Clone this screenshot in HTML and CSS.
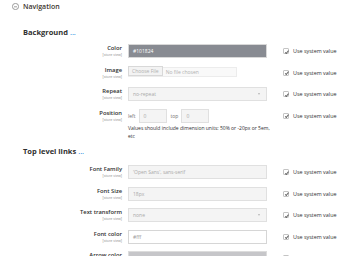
FILE: index.html
```html
<!DOCTYPE html>
<html lang="en">
<head>
    <meta charset="UTF-8">
    <meta name="viewport" content="width=device-width, initial-scale=1.0">
    <title>Navigation</title>
    <link rel="stylesheet" href="styles.css">
</head>
<body>
    <div class="section">
        <div class="section_head">
            <svg class="toggle" width="7" height="7" viewBox="0 0 14 14">
                <circle cx="7" cy="7" r="6.2" fill="none" stroke="#6b6b6b" stroke-width="1.3"/>
                <path d="M4 7.6h6" stroke="#6b6b6b" stroke-width="1.3"/>
            </svg>
            <span>Navigation</span>
        </div>

        <h3 class="group_title">Background <span class="dots">...</span></h3>

        <div class="field">
            <div class="label"><span class="name">Color</span><span class="scope">[store view]</span></div>
            <div class="value"><div class="input color_input">#101824</div></div>
            <div class="use_default"><span class="check"></span>Use system value</div>
        </div>

        <div class="field">
            <div class="label"><span class="name">Image</span><span class="scope">[store view]</span></div>
            <div class="value">
                <div class="file_input"><span class="file_btn">Choose File</span>No file chosen</div>
            </div>
            <div class="use_default"><span class="check"></span>Use system value</div>
        </div>

        <div class="field">
            <div class="label"><span class="name">Repeat</span><span class="scope">[store view]</span></div>
            <div class="value"><div class="input select">no-repeat<span class="arrow"></span></div></div>
            <div class="use_default"><span class="check"></span>Use system value</div>
        </div>

        <div class="field">
            <div class="label"><span class="name">Position</span><span class="scope">[store view]</span></div>
            <div class="value">
                <div class="position">
                    <span class="pos_label">left</span><div class="input small">0</div>
                    <span class="pos_label">top</span><div class="input small">0</div>
                </div>
                <p class="note">Values should include dimension units: 50% or -20px or 5em,<br>etc</p>
            </div>
            <div class="use_default"><span class="check"></span>Use system value</div>
        </div>

        <h3 class="group_title second">Top level links <span class="dots">...</span></h3>

        <div class="field">
            <div class="label"><span class="name">Font Family</span><span class="scope">[store view]</span></div>
            <div class="value"><div class="input">'Open Sans', sans-serif</div></div>
            <div class="use_default"><span class="check"></span>Use system value</div>
        </div>

        <div class="field">
            <div class="label"><span class="name">Font Size</span><span class="scope">[store view]</span></div>
            <div class="value"><div class="input">18px</div></div>
            <div class="use_default"><span class="check"></span>Use system value</div>
        </div>

        <div class="field">
            <div class="label"><span class="name">Text transform</span><span class="scope">[store view]</span></div>
            <div class="value"><div class="input select">none<span class="arrow"></span></div></div>
            <div class="use_default"><span class="check"></span>Use system value</div>
        </div>

        <div class="field">
            <div class="label"><span class="name">Font color</span><span class="scope">[store view]</span></div>
            <div class="value"><div class="input white">#fff</div></div>
            <div class="use_default"><span class="check"></span>Use system value</div>
        </div>

        <div class="field">
            <div class="label"><span class="name">Arrow color</span><span class="scope">[store view]</span></div>
            <div class="value"><div class="input arrow_color"></div></div>
            <div class="use_default"><span class="check"></span>Use system value</div>
        </div>
    </div>
</body>
</html>
```

FILE: styles.css
```css
body {
    margin: 0;
    background: #ffffff;
    font-family: 'Open Sans', 'Liberation Sans', sans-serif;
    color: #303030;
    overflow: hidden;
}

.section {
    padding-top: 2px;
}

.section_head {
    display: flex;
    align-items: center;
    gap: 4px;
    padding-left: 12px;
    height: 8px;
    font-size: 7px;
    font-weight: 600;
    color: #41362f;
}

.toggle {
    display: block;
}

.group_title {
    margin: 17px 0 7px 23px;
    font-size: 7.5px;
    font-weight: 700;
    line-height: 10px;
    color: #303030;
}

.group_title.second {
    margin-top: -1px;
    margin-bottom: 9px;
}

.dots {
    color: #007bdb;
    font-weight: 400;
}

.field {
    display: grid;
    grid-template-columns: 122px 139px auto;
    column-gap: 6px;
    margin-bottom: 7.5px;
}

.label {
    display: flex;
    flex-direction: column;
    align-items: flex-end;
    padding-top: 1px;
}

.name {
    font-size: 5.8px;
    font-weight: 600;
    line-height: 7px;
    color: #303030;
}

.scope {
    font-size: 3.6px;
    line-height: 5px;
    color: #8a8a8a;
}

.input {
    box-sizing: border-box;
    height: 14px;
    padding: 0 4px;
    border: 1px solid #e0e0e0;
    background: #f4f4f4;
    font-size: 5px;
    line-height: 12px;
    color: #a9a9a9;
    position: relative;
}

.color_input {
    background: #888b92;
    border-color: #d8d8d8;
    color: #ffffff;
}

.white {
    background: #ffffff;
    border-color: #d6d6d6;
    color: #9a9a9a;
}

.arrow_color {
    background: #c6c6c9;
    border-color: #dcdcdc;
}

.select .arrow {
    position: absolute;
    right: 6px;
    top: 5px;
    border-left: 1.5px solid transparent;
    border-right: 1.5px solid transparent;
    border-top: 2px solid #b5b5b5;
}

.file_input {
    box-sizing: border-box;
    width: 109px;
    height: 10px;
    margin-top: 1px;
    display: flex;
    align-items: center;
    gap: 3px;
    border: 1px solid #ececec;
    background: #f9f9f9;
    font-size: 5px;
    color: #b0b0b0;
}

.file_btn {
    box-sizing: border-box;
    height: 10px;
    margin: -1px 0 0 -1px;
    padding: 0 3px;
    border: 1px solid #d8d8d8;
    background: #f3f3f3;
    line-height: 8px;
}

.position {
    display: flex;
    align-items: center;
    gap: 3px;
}

.pos_label {
    font-size: 5px;
    color: #707070;
}

.input.small {
    width: 28px;
    margin-right: 1px;
}

.note {
    margin: 1px 0 0 0;
    width: 160px;
    font-size: 5px;
    line-height: 8px;
    color: #303030;
}

.use_default {
    display: flex;
    align-items: center;
    gap: 4px;
    margin-left: 10px;
    height: 14px;
    font-size: 5.4px;
    color: #303030;
}

.check {
    box-sizing: border-box;
    width: 6px;
    height: 6px;
    border: 0.6px solid #c4c4c4;
    border-radius: 1px;
    position: relative;
}

.check::after {
    content: "";
    position: absolute;
    left: 1.5px;
    top: 0.5px;
    width: 1.3px;
    height: 2.5px;
    border-right: 0.7px solid #666666;
    border-bottom: 0.7px solid #666666;
    transform: rotate(40deg);
}
```
